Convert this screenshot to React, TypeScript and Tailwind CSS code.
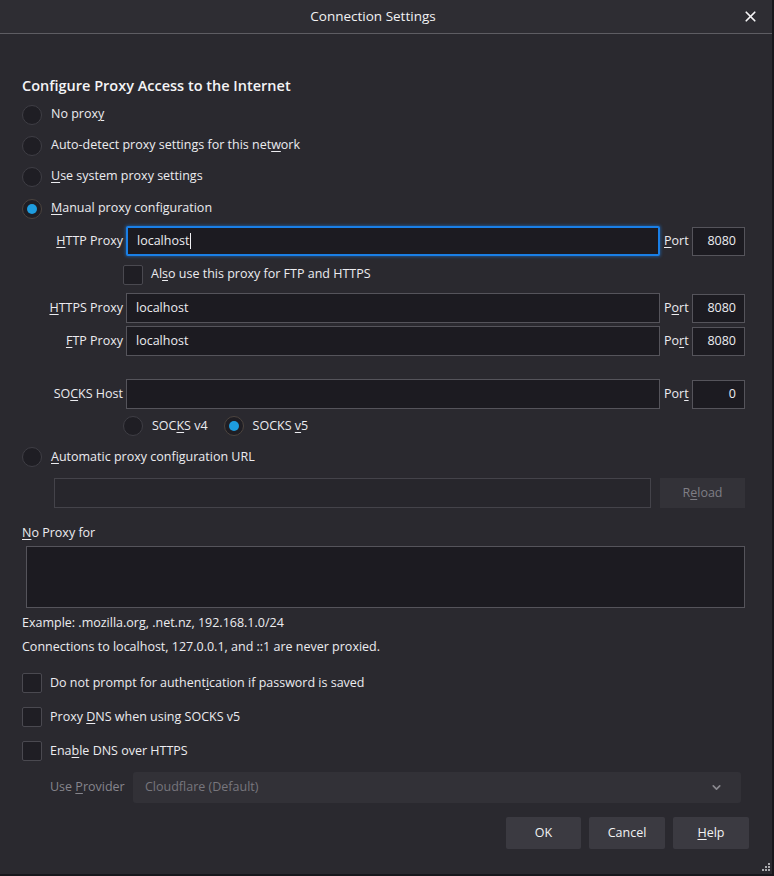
import { X, ChevronDown } from 'lucide-react';

const font = { fontFamily: '"Open Sans", "Noto Sans", sans-serif' };

function K({ children }: { children: string }) {
  return <span className="underline underline-offset-[2px] decoration-1">{children}</span>;
}

function Radio({ checked = false }: { checked?: boolean }) {
  return (
    <span
      className={`flex h-[20px] w-[20px] shrink-0 items-center justify-center rounded-full border bg-[#1f1e24] ${
        checked ? 'border-[#4c443f]' : 'border-[#3f3e45]'
      }`}
    >
      {checked && <span className="h-[10px] w-[10px] rounded-full bg-[#1e9ddf]" />}
    </span>
  );
}

function Checkbox() {
  return <span className="h-[20px] w-[20px] shrink-0 rounded-[2px] border border-[#4a4950] bg-[#1f1e24]" />;
}

function ProxyRow({
  label,
  value,
  port,
  portLabel,
  focused = false,
}: {
  label: React.ReactNode;
  value: string;
  port: string;
  portLabel: React.ReactNode;
  focused?: boolean;
}) {
  return (
    <div className="flex h-[30px] items-center">
      <div className="w-[104px] shrink-0 pr-[3px] text-right">{label}</div>
      <div
        className={`flex h-full flex-1 items-center bg-[#1c1b21] pl-[9px] ${
          focused
            ? 'rounded-[2px] border-2 border-[#1a7fe6] shadow-[0_0_3px_1px_rgba(26,127,230,0.45)]'
            : 'border border-[#55545b]'
        }`}
      >
        {value}
        {focused && <span className="ml-[1px] h-[16px] w-px bg-[#f0f0f4]" />}
      </div>
      <div className="w-[32px] shrink-0 pl-[4px]">{portLabel}</div>
      <div className="flex h-[29px] w-[53px] shrink-0 items-center justify-end border border-[#55545b] bg-[#1c1b21] pr-[8px]">
        {port}
      </div>
    </div>
  );
}

export default function App() {
  return (
    <div
      className="flex h-[876px] w-[774px] flex-col border-r-2 border-b-2 border-[#18171c] bg-[#2a292f] text-[12.5px] text-[#ececf0]"
      style={font}
    >
      <div className="relative flex h-[34px] shrink-0 items-center justify-center border-b border-[#5e5d63] bg-[#2e2d33] pr-[26px]">
        <span className="text-[13.5px] text-[#f2f2f4]">Connection Settings</span>
        <X className="absolute right-[13px] top-[8px] h-[17px] w-[17px] text-[#f4f4f6]" strokeWidth={2.4} />
      </div>

      <div className="flex flex-1 flex-col pl-[22px] pr-[27px]">
        <div className="mt-[42px] flex h-[20px] items-center text-[14.5px] font-semibold text-[#f4f4f6]">
          Configure Proxy Access to the Internet
        </div>

        <label className="mt-[3px] flex h-[31px] items-center gap-[9px]">
          <Radio />
          <span>
            No prox<K>y</K>
          </span>
        </label>
        <label className="flex h-[31px] items-center gap-[9px]">
          <Radio />
          <span>
            Auto-detect proxy settings for this net<K>w</K>ork
          </span>
        </label>
        <label className="flex h-[31px] items-center gap-[9px]">
          <Radio />
          <span>
            <K>U</K>se system proxy settings
          </span>
        </label>
        <label className="mt-[1px] flex h-[31px] items-center gap-[9px]">
          <Radio checked />
          <span>
            <K>M</K>anual proxy configuration
          </span>
        </label>

        <div className="mt-[2px]">
          <ProxyRow
            focused
            label={
              <>
                <K>H</K>TTP Proxy
              </>
            }
            value="localhost"
            portLabel={
              <>
                <K>P</K>ort
              </>
            }
            port="8080"
          />
        </div>
        <label className="flex h-[37px] items-center gap-[8px] pl-[101px]">
          <Checkbox />
          <span>
            Al<K>s</K>o use this proxy for FTP and HTTPS
          </span>
        </label>
        <ProxyRow
          label={
            <>
              <K>H</K>TTPS Proxy
            </>
          }
          value="localhost"
          portLabel={
            <>
              P<K>o</K>rt
            </>
          }
          port="8080"
        />
        <div className="mt-[3px]">
          <ProxyRow
            label={
              <>
                <K>F</K>TP Proxy
              </>
            }
            value="localhost"
            portLabel={
              <>
                Po<K>r</K>t
              </>
            }
            port="8080"
          />
        </div>
        <div className="mt-[23px]">
          <ProxyRow
            label={
              <>
                SO<K>C</K>KS Host
              </>
            }
            value=""
            portLabel={
              <>
                Por<K>t</K>
              </>
            }
            port="0"
          />
        </div>
        <div className="flex h-[34px] items-center pl-[101px]">
          <label className="flex items-center gap-[9px]">
            <Radio />
            <span>
              SOC<K>K</K>S v4
            </span>
          </label>
          <label className="ml-[16px] flex items-center gap-[9px]">
            <Radio checked />
            <span>
              SOCKS <K>v</K>5
            </span>
          </label>
        </div>
        <label className="flex h-[28px] items-center gap-[9px]">
          <Radio />
          <span>
            <K>A</K>utomatic proxy configuration URL
          </span>
        </label>
        <div className="mt-[7px] flex h-[30px] items-stretch pl-[32px]">
          <div className="flex-1 border border-[#44434a] bg-[#27262c]" />
          <button className="ml-[9px] w-[85px] bg-[#333238] text-[#7f7e85]">
            R<K>e</K>load
          </button>
        </div>

        <div className="mt-[15px] flex h-[20px] items-center">
          <span>
            <K>N</K>o Proxy for
          </span>
        </div>
        <div className="ml-[4px] mt-[3px] h-[62px] border border-[#55545b] bg-[#1c1b21]" />
        <div className="mt-[5px] flex h-[20px] items-center">Example: .mozilla.org, .net.nz, 192.168.1.0/24</div>
        <div className="mt-[4px] flex h-[20px] items-center">
          Connections to localhost, 127.0.0.1, and ::1 are never proxied.
        </div>

        <label className="mt-[9px] flex h-[34px] items-center gap-[8px]">
          <Checkbox />
          <span>
            Do not prompt for authent<K>i</K>cation if password is saved
          </span>
        </label>
        <label className="flex h-[34px] items-center gap-[8px]">
          <Checkbox />
          <span>
            Proxy <K>D</K>NS when using SOCKS v5
          </span>
        </label>
        <label className="flex h-[34px] items-center gap-[8px]">
          <Checkbox />
          <span>
            Ena<K>b</K>le DNS over HTTPS
          </span>
        </label>
        <div className="mt-[4px] flex h-[31px] items-center pl-[28px] pr-[4px]">
          <span className="w-[83px] shrink-0 text-[#86858c]">
            Use <K>P</K>rovider
          </span>
          <div className="flex h-full flex-1 items-center justify-between rounded-[3px] bg-[#323137] pl-[12px] pr-[18px] text-[#77767d]">
            <span>Cloudflare (Default)</span>
            <ChevronDown className="h-[13px] w-[13px] text-[#8a898f]" strokeWidth={3} />
          </div>
        </div>

        <div className="mr-[-4px] mt-[14px] flex h-[32px] justify-end gap-[8px]">
          <button className="w-[75px] rounded-[2px] bg-[#3b3a41] text-[#f2f2f4]">OK</button>
          <button className="w-[76px] rounded-[2px] bg-[#3b3a41] text-[#f2f2f4]">Cancel</button>
          <button className="w-[76px] rounded-[2px] bg-[#3b3a41] text-[#f2f2f4]">
            <K>H</K>elp
          </button>
        </div>
        <div className="mr-[-26px] mt-auto mb-[2px] flex justify-end">
          <svg width="10" height="10" viewBox="0 0 10 10" fill="#a9a9ad">
            <rect x="7" y="1" width="2" height="2" />
            <rect x="4" y="4" width="2" height="2" />
            <rect x="7" y="4" width="2" height="2" />
            <rect x="1" y="7" width="2" height="2" />
            <rect x="4" y="7" width="2" height="2" />
            <rect x="7" y="7" width="2" height="2" />
          </svg>
        </div>
      </div>
    </div>
  );
}
